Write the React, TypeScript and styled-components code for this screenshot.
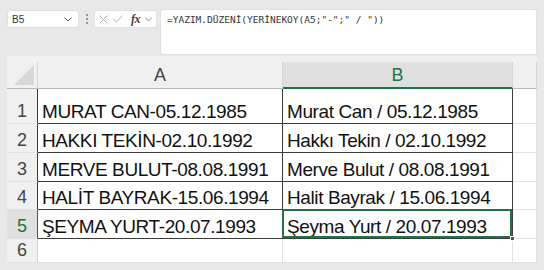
import React from 'react';
import styled, { createGlobalStyle, css } from 'styled-components';

const Global = createGlobalStyle`
  html, body { margin: 0; padding: 0; background: #e8e8e8; }
  body { width: 544px; height: 270px; overflow: hidden; font-family: "Liberation Sans", Arial, sans-serif; }
`;

const Page = styled.div`
  width: 544px;
  height: 270px;
  background: #e8e8e8;
  display: flex;
  flex-direction: column;
`;

const TopBar = styled.div`
  display: flex;
  align-items: flex-start;
  padding: 9px 0 0 7px;
  height: 55px;
  box-sizing: border-box;
`;

const NameBox = styled.div`
  margin-top: 1px;
  width: 72px;
  height: 18px;
  box-sizing: border-box;
  background: #fff;
  border: 1px solid #dedede;
  border-radius: 3px;
  display: flex;
  align-items: center;
  justify-content: space-between;
  padding: 0 6px 0 4px;
  font-size: 10px;
  color: #333;
`;

const Dots = styled.div`
  width: 15px;
  height: 18px;
  margin-top: 1px;
  display: flex;
  flex-direction: column;
  align-items: center;
  justify-content: center;
  gap: 2px;
  span {
    width: 2px;
    height: 2px;
    border-radius: 1px;
    background: #7a7a7a;
  }
`;

const FxBox = styled.div`
  margin-top: 1px;
  width: 63px;
  height: 18px;
  box-sizing: border-box;
  background: #fff;
  border: 1px solid #e2e2e2;
  border-radius: 3px;
  display: flex;
  align-items: center;
  padding: 0 3px 0 4px;
  gap: 5px;
`;

const Fx = styled.span`
  font-family: "Liberation Serif", "Times New Roman", serif;
  font-style: italic;
  font-weight: bold;
  font-size: 12px;
  color: #444;
  margin-left: 3px;
  letter-spacing: -0.5px;
`;

const FormulaBox = styled.div`
  margin-left: 3px;
  width: 377px;
  height: 46px;
  box-sizing: border-box;
  background: #fff;
  border: 1px solid #e0e0e0;
  border-radius: 3px;
  padding: 4px 6px;
  font-family: "DejaVu Sans Mono", "Liberation Mono", monospace;
  font-size: 9.5px;
  line-height: 12px;
  color: #333;
  white-space: pre;
`;

const Sheet = styled.div`
  margin: 1px 0 0 7px;
  width: 530px;
  background: #f0f0f0;
  padding-top: 6px;
  display: grid;
  grid-template-columns: 31px 245px 230px 24px;
  grid-template-rows: 27px 35px 29px 29px 28px 29px 24px;
`;

const Corner = styled.div`
  box-sizing: border-box;
  border-right: 1px solid #d6d6d6;
  border-bottom: 1px solid #b9b9b9;
  display: flex;
  align-items: flex-end;
  justify-content: flex-end;
  padding: 0 3px 3px 0;
`;

const ColHeader = styled.div<{ $sel?: boolean }>`
  box-sizing: border-box;
  border-right: 1px solid #d6d6d6;
  border-bottom: 1px solid #b9b9b9;
  display: flex;
  align-items: center;
  justify-content: center;
  font-size: 18px;
  color: #444;
  padding-top: 1px;
  ${(p) =>
    p.$sel &&
    css`
      background: #e0e0e0;
      color: #217346;
      border-bottom: 2px solid #217346;
      padding-top: 2px;
    `}
`;

const RowHeader = styled.div<{ $sel?: boolean; $edge?: boolean }>`
  box-sizing: border-box;
  border-right: 1px solid ${(p) => (p.$sel ? '#217346' : p.$edge ? '#3a3a3a' : '#d6d6d6')};
  border-bottom: 1px solid #e2e2e2;
  display: flex;
  align-items: flex-end;
  justify-content: center;
  padding-bottom: 2px;
  font-size: 18px;
  line-height: 19px;
  color: ${(p) => (p.$sel ? '#217346' : '#444')};
  background: ${(p) => (p.$sel ? '#e0e0e0' : 'transparent')};
`;

const Cell = styled.div<{ $boxed?: boolean; $sel?: boolean }>`
  position: relative;
  box-sizing: border-box;
  background: #fff;
  border-right: 1px solid ${(p) => (p.$boxed ? '#3a3a3a' : '#e1e1e1')};
  border-bottom: 1px solid ${(p) => (p.$boxed ? '#3a3a3a' : '#e1e1e1')};
  display: flex;
  align-items: flex-end;
  padding: 0 4px 2px 4px;
  font-size: 19px;
  line-height: 19px;
  letter-spacing: -0.4px;
  color: #111;
  white-space: nowrap;
  ${(p) =>
    p.$sel &&
    css`
      &::after {
        content: '';
        position: absolute;
        top: -1px;
        left: -1px;
        right: 0;
        bottom: 0;
        border: 2px solid #217346;
      }
      &::before {
        content: '';
        position: absolute;
        right: -3px;
        bottom: -3px;
        width: 5px;
        height: 5px;
        background: #217346;
        border: 1px solid #fff;
        box-sizing: border-box;
        z-index: 2;
      }
    `}
`;

const Chevron = () => (
  <svg width="8" height="5" viewBox="0 0 8 5">
    <polyline points="0.5,0.5 4,4 7.5,0.5" fill="none" stroke="#555" strokeWidth="1" />
  </svg>
);

const rows: [string, string][] = [
  ['MURAT CAN-05.12.1985', 'Murat Can / 05.12.1985'],
  ['HAKKI TEKİN-02.10.1992', 'Hakkı Tekin / 02.10.1992'],
  ['MERVE BULUT-08.08.1991', 'Merve Bulut / 08.08.1991'],
  ['HALİT BAYRAK-15.06.1994', 'Halit Bayrak / 15.06.1994'],
  ['ŞEYMA YURT-20.07.1993', 'Şeyma Yurt / 20.07.1993'],
];

export default function App() {
  return (
    <Page>
      <Global />
      <TopBar>
        <NameBox>
          <span>B5</span>
          <Chevron />
        </NameBox>
        <Dots>
          <span />
          <span />
          <span />
        </Dots>
        <FxBox>
          <svg width="9" height="9" viewBox="0 0 9 9">
            <path d="M0.5 0.5 L8.5 8.5 M8.5 0.5 L0.5 8.5" stroke="#b4b4b4" strokeWidth="1" />
          </svg>
          <svg width="10" height="8" viewBox="0 0 10 8">
            <polyline points="0.5,4 3.5,7.2 9.5,0.5" fill="none" stroke="#b4b4b4" strokeWidth="1" />
          </svg>
          <Fx>fx</Fx>
          <svg width="7" height="5" viewBox="0 0 7 5">
            <polyline points="0.5,0.8 3.5,4 6.5,0.8" fill="none" stroke="#888" strokeWidth="1" />
          </svg>
        </FxBox>
        <FormulaBox>{'=YAZIM.DÜZENİ(YERİNEKOY(A5;"-";" / "))'}</FormulaBox>
      </TopBar>
      <Sheet>
        <Corner>
          <svg width="20" height="20" viewBox="0 0 20 20">
            <polygon points="20,0 20,20 0,20" fill="#d8d8d8" />
          </svg>
        </Corner>
        <ColHeader>A</ColHeader>
        <ColHeader $sel>B</ColHeader>
        <ColHeader />
        {rows.map(([a, b], i) => (
          <React.Fragment key={i}>
            <RowHeader $edge $sel={i === 4}>{i + 1}</RowHeader>
            <Cell $boxed>{a}</Cell>
            <Cell $boxed $sel={i === 4}>{b}</Cell>
            <Cell />
          </React.Fragment>
        ))}
        <RowHeader>6</RowHeader>
        <Cell />
        <Cell />
        <Cell />
      </Sheet>
    </Page>
  );
}
